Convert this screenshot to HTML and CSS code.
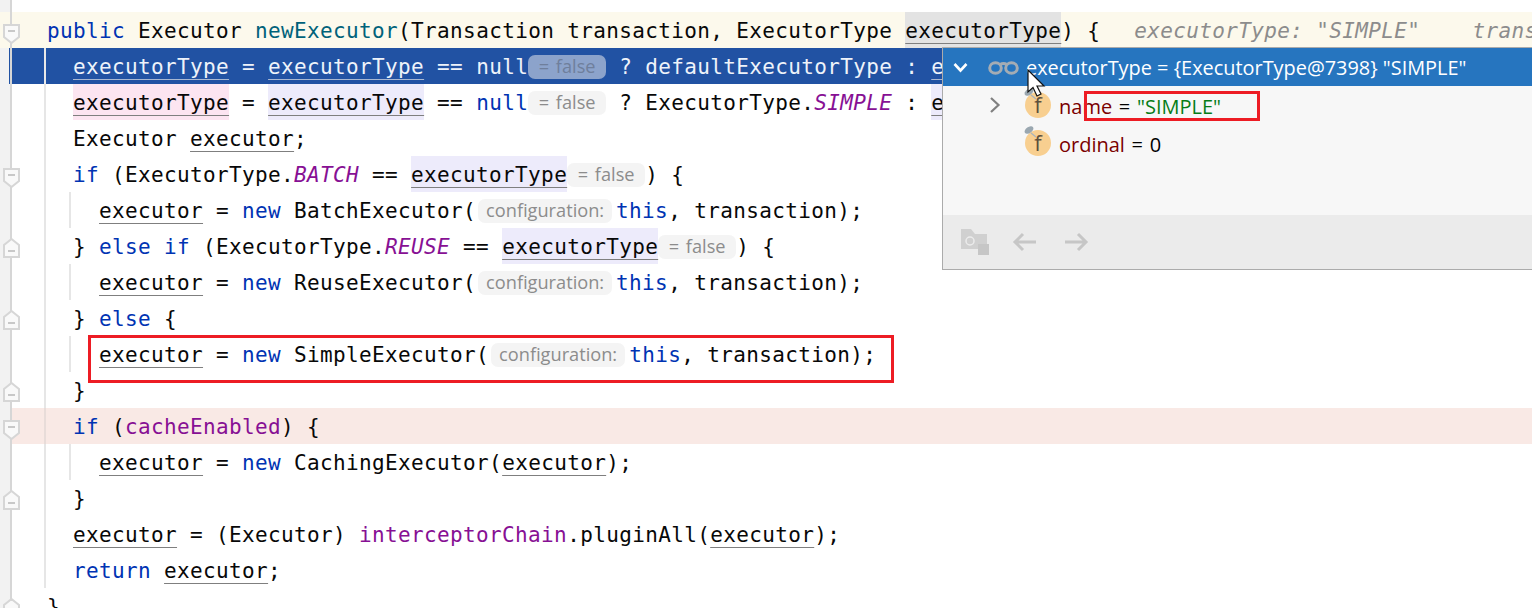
FILE: index.html
```html
<!DOCTYPE html>
<html lang="en">
<head>
<meta charset="utf-8">
<title>Executor</title>
<link rel="stylesheet" href="styles.css">
</head>
<body>
<svg class="defs" width="0" height="0" aria-hidden="true">
  <symbol id="fold-down" viewBox="0 0 17 20"><path d="M1 1H16V13L8.5 19L1 13Z" fill="#f9f9f9" stroke="#d6d6d6" stroke-width="2"/><path d="M5 7H12" stroke="#c8c8c8" stroke-width="2"/></symbol>
  <symbol id="fold-up" viewBox="0 0 17 20"><path d="M1 19H16V7L8.5 1L1 7Z" fill="#f9f9f9" stroke="#d6d6d6" stroke-width="2"/><path d="M5 13H12" stroke="#c8c8c8" stroke-width="2"/></symbol>
</svg>
<main class="editor">
  <div class="strip"></div>
  <div class="foldline"></div>
  <div class="line current i0"><svg class="fold down"><use href="#fold-down"/></svg><span class="kw">public</span> Executor <span class="fn">newExecutor</span>(Transaction transaction, ExecutorType <span class="box param"><span class="v">executorType</span></span>) {<span class="inlay first">executorType: "SIMPLE"</span><span class="inlay second">transaction: SpringManagedTransaction</span></div>
  <div class="line selected i1 g1"><span class="v">executorType</span> = <span class="v">executorType</span> == <span class="kw">null</span><span class="hint">= false</span> ? defaultExecutorType : <span class="v">executorType</span>;</div>
  <div class="line i1 g1"><span class="box write"><span class="v">executorType</span></span> = <span class="box read"><span class="v">executorType</span></span> == <span class="kw">null</span><span class="hint">= false</span> ? ExecutorType.<span class="st">SIMPLE</span> : <span class="box read"><span class="v">executorType</span></span>;</div>
  <div class="line i1 g1">Executor <span class="v">executor</span>;</div>
  <div class="line i1 g1"><svg class="fold down"><use href="#fold-down"/></svg><span class="kw">if</span> (ExecutorType.<span class="st">BATCH</span> == <span class="box read"><span class="v">executorType</span></span><span class="hint">= false</span>) {</div>
  <div class="line i2 g1 g2"><span class="v">executor</span> = <span class="kw">new</span> BatchExecutor(<span class="hint name">configuration:</span><span class="kw">this</span>, transaction);</div>
  <div class="line i1 g1"><svg class="fold up"><use href="#fold-up"/></svg>} <span class="kw">else if</span> (ExecutorType.<span class="st">REUSE</span> == <span class="box read"><span class="v">executorType</span></span><span class="hint">= false</span>) {</div>
  <div class="line i2 g1 g2"><span class="v">executor</span> = <span class="kw">new</span> ReuseExecutor(<span class="hint name">configuration:</span><span class="kw">this</span>, transaction);</div>
  <div class="line i1 g1"><svg class="fold up"><use href="#fold-up"/></svg>} <span class="kw">else</span> {</div>
  <div class="line i2 g1 g2"><span class="v">executor</span> = <span class="kw">new</span> SimpleExecutor(<span class="hint name">configuration:</span><span class="kw">this</span>, transaction);</div>
  <div class="line i1 g1"><svg class="fold up"><use href="#fold-up"/></svg>}</div>
  <div class="line breakpoint i1 g1"><svg class="fold down"><use href="#fold-down"/></svg><span class="kw">if</span> (<span class="st plain">cacheEnabled</span>) {</div>
  <div class="line i2 g1 g2"><span class="v">executor</span> = <span class="kw">new</span> CachingExecutor(<span class="v">executor</span>);</div>
  <div class="line i1 g1"><svg class="fold up"><use href="#fold-up"/></svg>}</div>
  <div class="line i1 g1"><span class="v">executor</span> = (Executor) <span class="st plain">interceptorChain</span>.pluginAll(<span class="v">executor</span>);</div>
  <div class="line i1 g1"><span class="kw">return</span> <span class="v">executor</span>;</div>
  <div class="line i0"><svg class="fold up"><use href="#fold-up"/></svg>}</div>

  <div class="redbox code-box"></div>

  <section class="popup">
    <div class="tree">
      <div class="head">
        <svg class="chev-down" width="15" height="11" viewBox="0 0 15 11"><path d="M1.500 2L7.500 8.500L13.500 2" fill="none" stroke="#fff" stroke-width="2.600"/></svg>
        <svg class="glasses" width="31" height="14" viewBox="0 0 31 14"><g fill="none" stroke="#a4acb4" stroke-width="3"><ellipse cx="7.500" cy="7" rx="5.800" ry="5.300"/><ellipse cx="23.500" cy="7" rx="5.800" ry="5.300"/><path d="M12 3.500Q15.500 1.500 19 3.500"/></g></svg>
        <span class="title">executorType = {ExecutorType@7398} "SIMPLE"</span>
      </div>
      <div class="row">
        <svg class="chev-right" width="12" height="18" viewBox="0 0 12 18"><path d="M2 2L9.500 9L2 16" fill="none" stroke="#808080" stroke-width="2.200"/></svg>
        <svg class="field" width="28" height="32" viewBox="0 0 28 32"><circle cx="15" cy="19" r="13" fill="#f8cf90"/><path d="M8 9L13 13" stroke="#a9b4bd" stroke-width="1.500"/><ellipse cx="6" cy="6" rx="5" ry="3" transform="rotate(-35 6 6)" fill="#9aa7b0"/><text x="15" y="27" text-anchor="middle" class="f">f</text></svg>
        <span class="var"><span class="nm">name</span> = <span class="str">"SIMPLE"</span></span>
      </div>
      <div class="row">
        <span class="chev-space"></span>
        <svg class="field" width="28" height="32" viewBox="0 0 28 32"><circle cx="15" cy="19" r="13" fill="#f8cf90"/><path d="M8 9L13 13" stroke="#a9b4bd" stroke-width="1.500"/><ellipse cx="6" cy="6" rx="5" ry="3" transform="rotate(-35 6 6)" fill="#9aa7b0"/><text x="15" y="27" text-anchor="middle" class="f">f</text></svg>
        <span class="var"><span class="nm">ordinal</span> = 0</span>
      </div>
    </div>
    <div class="toolbar">
      <svg width="28" height="26" viewBox="0 0 28 26"><path d="M0 0H10L14 5H26V15H17V20H0Z" fill="#d0d0d0"/><circle cx="9" cy="12" r="4" fill="none" stroke="#ececec" stroke-width="1.500"/><rect x="17" y="15" width="11" height="11" fill="#c6c6c6"/></svg>
      <svg width="24" height="20" viewBox="0 0 24 20"><path d="M24 10H3M11 2L3 10L11 18" fill="none" stroke="#c6c6c6" stroke-width="3"/></svg>
      <svg width="24" height="20" viewBox="0 0 24 20"><path d="M0 10H21M13 2L21 10L13 18" fill="none" stroke="#c6c6c6" stroke-width="3"/></svg>
    </div>
  </section>

  <div class="redbox value-box"></div>

  <svg class="cursor" width="20" height="30" viewBox="0 0 20 30"><path d="M1 1V23L6 18.500L10 27L14 25L10 17H17Z" fill="#fff" stroke="#111" stroke-width="1.200"/></svg>
</main>
</body>
</html>
```
FILE: styles.css
```css
* { box-sizing: border-box; }
html, body { margin: 0; padding: 0; background: #fff; }
.defs { position: absolute; }

.editor {
  position: relative;
  width: 1532px;
  height: 608px;
  padding-top: 12px;
  overflow: hidden;
  background: #fff;
  color: #080808;
  font-family: "DejaVu Sans Mono", monospace;
  font-size: 21px;
  letter-spacing: 0.36px;
}

.strip { position: absolute; left: 0; top: 0; bottom: 0; width: 10px; background: #f2f2f2; }
.foldline { position: absolute; left: 10px; top: 0; bottom: 0; width: 2px; background: #d6d6d6; z-index: 2; }

.line {
  position: relative;
  height: 36px;
  line-height: 38px;
  white-space: pre;
}
.i0 { padding-left: 47px; }
.i1 { padding-left: 73px; }
.i2 { padding-left: 99px; }

.g1::before, .g2::after {
  content: "";
  position: absolute;
  top: 0;
  bottom: 0;
  width: 2px;
  background: #e6e6e6;
}
.g1::before { left: 44px; }
.g2::after { left: 69px; }

.current { background: #fcf9ec; }
.selected { margin-left: 9px; padding-left: 64px; background: #2152a3; color: #eef3fa; }
.selected.g1::before { left: 35px; background: #e8e8e8; }
.breakpoint { margin-left: 11px; padding-left: 62px; background: #f9e9e5; }
.breakpoint.g1::before { left: 33px; background: #e8dcd9; }
.breakpoint .fold { left: -8px; }

.fold { position: absolute; left: 3px; width: 17px; height: 20px; z-index: 3; }
.fold.down { top: 12px; }
.fold.up { top: 10px; }

.kw { color: #0033b3; }
.fn { color: #00627a; }
.st { color: #871094; font-style: italic; }
.st.plain { font-style: normal; }
.selected .kw { color: #eef3fa; }

.v {
  text-decoration: underline;
  text-decoration-color: #7f7f7f;
  text-decoration-thickness: 1px;
  text-underline-offset: 5px;
  text-decoration-skip-ink: none;
}
.selected .v { text-decoration-color: #a9b8d2; }

.box { display: inline-block; height: 36px; vertical-align: top; }
.param { background: #e3e3e3; }
.write { background: #fce5f1; }
.read { background: #edebfb; }

.hint {
  display: inline-block;
  height: 24px;
  width: 78px;
  line-height: 23px;
  vertical-align: 1px;
  text-align: center;
  border-radius: 7px;
  background: #f4f4f4;
  color: #8c8c8c;
  font-family: "Open Sans", sans-serif;
  font-size: 18.2px;
  letter-spacing: 0;
  word-spacing: 2px;
}
.hint.name { width: 134px; margin: 0 4px 0 2px; }
.selected .hint { background: #8ca3cb; color: #6f7f9c; }

.inlay { color: #8c8c8c; font-style: italic; }
.inlay.first { margin-left: 34px; }
.inlay.second { margin-left: 52px; }

.redbox { position: absolute; border: 3px solid #ed1c24; z-index: 6; }
.code-box { left: 88px; top: 335px; width: 806px; height: 48px; }
.value-box { left: 1084px; top: 91px; width: 176px; height: 30px; }

.popup {
  position: absolute;
  left: 942px;
  top: 47px;
  width: 600px;
  height: 223px;
  display: flex;
  flex-direction: column;
  border: 1px solid #ababab;
  background: #f7f7f7;
  font-family: "Open Sans", sans-serif;
  font-size: 20px;
  letter-spacing: 0;
  z-index: 5;
}
.tree { flex: 1; }
.head {
  display: flex;
  align-items: center;
  height: 38px;
  padding: 1px 0 0 10px;
  background: #2675bf;
  color: #fff;
}
.chev-down { margin-right: 20px; }
.glasses { margin-right: 7px; }
.title { font-size: 19.9px; }
.row { display: flex; align-items: center; height: 38px; padding-left: 46px; color: #000; }
.chev-right { flex: none; margin-right: 32px; }
.chev-space { flex: none; width: 12px; margin-right: 32px; }
.field { flex: none; margin-top: -6px; margin-left: -10px; margin-right: 8px; }
.f { font-family: "Open Sans", sans-serif; font-size: 22px; fill: #5e4f3c; }
.var { margin-top: 2px; word-spacing: 1.500px; }
.nm { color: #7b0000; }
.str { color: #067d17; }

.toolbar {
  display: flex;
  align-items: center;
  gap: 23px;
  height: 54px;
  padding-left: 18px;
  background: #ebebeb;
}
.toolbar svg + svg + svg { margin-left: 6px; }

.cursor { position: absolute; left: 1027px; top: 69px; z-index: 7; }
```
